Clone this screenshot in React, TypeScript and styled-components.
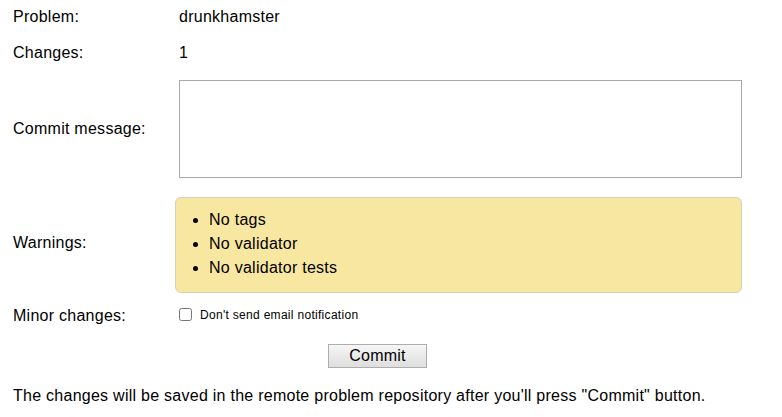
import styled, { createGlobalStyle } from 'styled-components'

const GlobalStyle = createGlobalStyle`
  body {
    margin: 0;
    background: #fff;
    font-family: 'Liberation Sans', Arial, sans-serif;
    color: #000;
  }
`

const warnings = ['No tags', 'No validator', 'No validator tests']

export default function App() {
  return (
    <>
      <GlobalStyle />
      <Page>
        <Form>
          <Label>Problem:</Label>
          <Value>drunkhamster</Value>

          <Label>Changes:</Label>
          <Value>1</Value>

          <Label>Commit message:</Label>
          <MessageArea />

          <Label>Warnings:</Label>
          <WarningBox>
            <WarningList>
              {warnings.map((w) => (
                <li key={w}>{w}</li>
              ))}
            </WarningList>
          </WarningBox>

          <Label>Minor changes:</Label>
          <CheckRow>
            <Checkbox type="checkbox" id="minor" />
            <CheckText htmlFor="minor">Don't send email notification</CheckText>
          </CheckRow>

          <ButtonRow>
            <CommitButton>Commit</CommitButton>
          </ButtonRow>
        </Form>
        <Note>
          The changes will be saved in the remote problem repository after you'll press "Commit" button.
        </Note>
      </Page>
    </>
  )
}

const Page = styled.div`
  padding: 8px 13px;
  letter-spacing: 0.26px;
`

const Form = styled.div`
  display: grid;
  grid-template-columns: 166px 563px;
  row-gap: 18px;
  align-items: center;
  font-size: 16px;
  line-height: 18px;
`

const Label = styled.div`
  white-space: nowrap;
`

const Value = styled.div``

const MessageArea = styled.textarea`
  box-sizing: border-box;
  width: 563px;
  height: 98px;
  margin: 0;
  border: 1px solid #a9a9a9;
  resize: none;
  display: block;
`

const WarningBox = styled.div`
  margin: 1px 0 -4px -4px;
  box-sizing: border-box;
  width: 567px;
  background: #f8e7a0;
  border: 1px solid #d7d0b5;
  border-radius: 6px;
  padding: 10px 0 12px;
`

const WarningList = styled.ul`
  margin: 0;
  padding-left: 33px;
  line-height: 24px;
`

const CheckRow = styled.div`
  display: flex;
  align-items: center;
  gap: 8px;
  margin-top: -3px;
`

const Checkbox = styled.input`
  margin: 0;
  width: 13px;
  height: 13px;
`

const CheckText = styled.label`
  font-size: 12px;
  line-height: 14px;
  letter-spacing: 0.3px;
`

const ButtonRow = styled.div`
  grid-column: 1 / 3;
  display: flex;
  justify-content: center;
  margin-top: 1px;
`

const CommitButton = styled.button`
  width: 99px;
  height: 24px;
  padding: 0;
  font-family: 'Liberation Sans', Arial, sans-serif;
  font-size: 16px;
  letter-spacing: 0.26px;
  color: #000;
  border: 1px solid #adadad;
  border-radius: 0;
  background: linear-gradient(#f6f6f6, #dedede);
`

const Note = styled.p`
  margin: 19px 0 0;
  font-size: 16px;
  line-height: 18px;
`
